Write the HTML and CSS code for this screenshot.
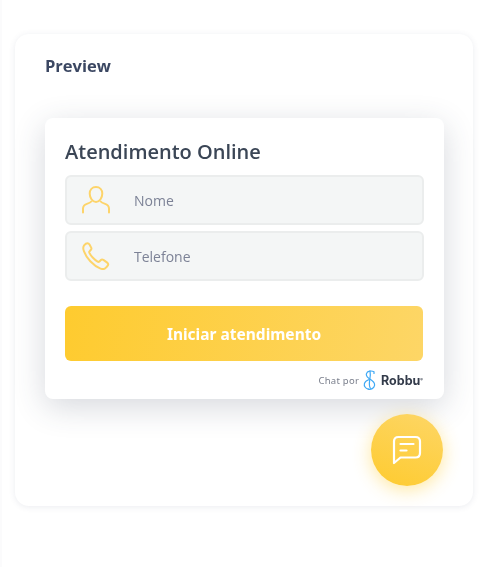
FILE: index.html
```html
<!DOCTYPE html>
<html lang="pt">
<head>
<meta charset="utf-8">
<title>Preview</title>
<link rel="stylesheet" href="styles.css">
</head>
<body>
<main class="panel">
  <h2 class="panel-title">Preview</h2>
  <section class="widget">
    <h1 class="widget-title">Atendimento Online</h1>
    <div class="fields">
      <label class="field">
        <svg class="field-icon" viewBox="0 0 28 28" fill="none" stroke="#fdd46a" stroke-width="2" stroke-linecap="round" stroke-linejoin="round"><path d="M14 1c-3.800 0-6.300 2.800-6.300 6.600 0 4 2.600 8.400 6.300 8.400s6.300-4.400 6.300-8.400C20.300 3.800 17.800 1 14 1z"/><path d="M9.300 15.500c-.7.9-1.900 1.500-3.800 2.100-2.800.9-4.500 2.200-4.500 4.900v4"/><path d="M18.700 15.500c.7.9 1.900 1.500 3.800 2.100 2.800.9 4.500 2.200 4.500 4.900v4"/></svg>
        <span class="field-label">Nome</span>
      </label>
      <label class="field">
        <svg class="field-icon" viewBox="0 0 28 28" fill="none" stroke="#fdd46a" stroke-width="2" stroke-linecap="round" stroke-linejoin="round"><path d="M5.500 1.200c-1 0-2.600 1.100-3.400 2.100C1 4.700 1.100 7 2 9.300c1.200 3.200 3.400 6.900 6.300 10 3 3.200 6.700 6 10.200 7.300 1.900.7 3.500.6 4.800-.4 1-.8 2.500-2.300 2.800-3.300.3-.9-.1-1.700-.9-2.300l-3.800-2.700c-.9-.6-1.800-.6-2.500.1l-1.500 1.500c-.5.500-1.100.5-1.800.1-1.700-1-3.400-2.500-4.900-4.100-1.300-1.400-2.500-3-3.300-4.600-.3-.7-.3-1.200.2-1.700l1.300-1.400c.7-.8.700-1.700.1-2.600L7.500 2.500c-.5-.8-1.200-1.300-2-1.300z"/></svg>
        <span class="field-label">Telefone</span>
      </label>
    </div>
    <button class="start" type="button">Iniciar atendimento</button>
    <footer class="credit">
      <span class="credit-text">Chat por</span>
      <svg class="credit-logo" viewBox="0 0 14 20" fill="none" stroke="#3fa9f5" stroke-width="1.200" stroke-linecap="round" stroke-linejoin="round"><path d="M11 3.500V1.800C8.500.4 4.200.8 3.400 3.800c-.7 2.700 1.900 4.300 4.200 5.800 2.400 1.600 4.500 3.300 3.900 6-.6 2.700-3.500 4.200-6.200 3.500"/><path d="M5.300 19.100C2.400 18.400.8 16 1.400 13.600c.5-2 2.500-3.200 4.300-3.900"/><path d="M7 1c.6 2.800.3 5.700-.2 8.400-.5 3-1.100 6 .6 8.900"/></svg>
      <span class="credit-brand">Robbu<sup class="credit-mark">®</sup></span>
    </footer>
  </section>
  <button class="fab" type="button" aria-label="Abrir chat">
    <svg class="fab-icon" viewBox="0 0 30 30" fill="none" stroke="#fff" stroke-width="2.200" stroke-linecap="round" stroke-linejoin="round"><path d="M2 28V6.500C2 3.800 3.800 2 6.500 2h17C26.200 2 28 3.800 28 6.500v11.500c0 2.700-1.800 4.500-4.500 4.500H8.500z"/><path d="M8.500 9h13"/><path d="M8.500 15.500h6"/></svg>
  </button>
</main>
</body>
</html>
```

FILE: styles.css
```css
* { box-sizing: border-box; }

html, body { height: 100%; }

body {
  margin: 0;
  padding: 34px 28px 0 15px;
  background: #fff;
  font-family: "Open Sans", "Noto Sans", sans-serif;
  overflow: hidden;
}

body::before {
  content: "";
  position: fixed;
  left: 0;
  top: 0;
  bottom: 0;
  width: 2px;
  background: #fbfbfc;
}

.panel {
  position: relative;
  height: 472px;
  padding: 22px 29px 0 30px;
  background: #fff;
  border-radius: 14px;
  box-shadow: 0 1px 6px rgba(60, 70, 110, 0.1);
}

.panel-title {
  margin: 0;
  height: 62px;
  font-family: "Open Sans", sans-serif;
  font-size: 16.500px;
  line-height: 19px;
  font-weight: 700;
  color: #3b4762;
}

.widget {
  height: 281px;
  padding: 19px 20px 0;
  background: #fff;
  border-radius: 8px;
  box-shadow: 0 8px 32px rgba(50, 60, 85, 0.2);
}

.widget-title {
  margin: 0 0 9px;
  font-size: 20px;
  line-height: 29px;
  font-weight: 600;
  color: #3b4656;
}

.fields {
  display: flex;
  flex-direction: column;
  gap: 6px;
}

.field {
  display: flex;
  align-items: center;
  height: 50px;
  padding-left: 15px;
  background: #f4f6f6;
  border: 2px solid #ebeded;
  border-radius: 6px;
}

.field-icon {
  width: 28px;
  height: 28px;
  flex: none;
}

.field-label {
  margin-left: 24px;
  font-size: 14px;
  color: #7c8296;
}

.start {
  display: block;
  width: calc(100% - 1px);
  height: 55px;
  margin-top: 25px;
  padding: 0;
  border: 0;
  border-radius: 6px;
  background: linear-gradient(100deg, #fecb2f 0%, #fdd666 100%);
  color: #fff;
  font-family: "Noto Sans", sans-serif;
  font-size: 15.500px;
  font-weight: 700;
}

.credit {
  display: flex;
  align-items: center;
  justify-content: flex-end;
  height: 38px;
  padding-right: 1px;
}

.credit-text {
  font-family: "Noto Sans", sans-serif;
  font-size: 9.500px;
  letter-spacing: 0.25px;
  color: #7a7f8c;
}

.credit-logo {
  width: 14px;
  height: 20px;
  margin: 0 4px;
}

.credit-brand {
  font-family: Inter, sans-serif;
  font-size: 12.500px;
  font-weight: 700;
  color: #333b4a;
}

.credit-mark {
  font-size: 4px;
  vertical-align: 4px;
  line-height: 0;
}

.fab {
  position: absolute;
  left: 356px;
  top: 380px;
  display: flex;
  align-items: center;
  justify-content: center;
  width: 72px;
  height: 72px;
  padding: 0;
  border: 0;
  border-radius: 50%;
  background: linear-gradient(200deg, #fdd666 0%, #fecb2f 100%);
  box-shadow: 0 4px 18px rgba(254, 203, 47, 0.45);
}

.fab-icon {
  width: 30px;
  height: 30px;
}
```
